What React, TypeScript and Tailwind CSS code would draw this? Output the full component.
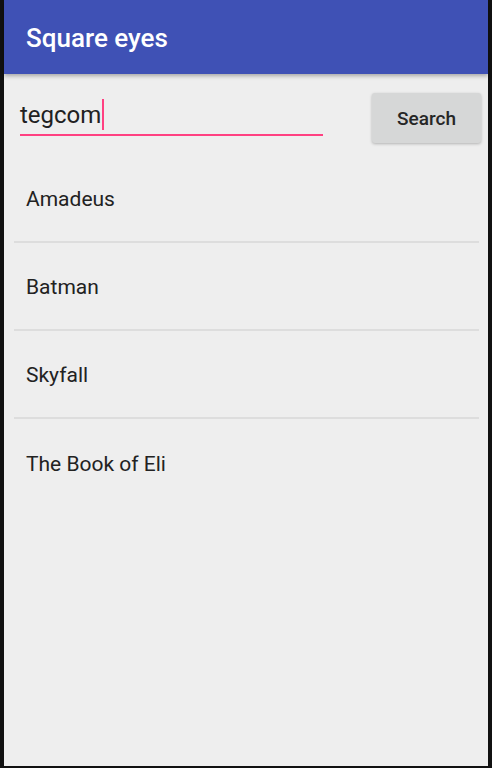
const movies = ['Amadeus', 'Batman', 'Skyfall', 'The Book of Eli']

export default function App() {
  return (
    <div className="h-[768px] w-full bg-[#111111] pl-[4px] pr-[4px] pb-[2px] font-['Roboto',sans-serif]">
      <div className="flex h-full flex-col bg-[#eeeeee]">
        <header className="relative z-10 flex h-[74px] shrink-0 items-center bg-[#3f51b5] pl-[22px] shadow-[0_2px_4px_rgba(0,0,0,0.3)]">
          <h1 className="pt-[2px] text-[26px] font-medium text-white">Square eyes</h1>
        </header>

        <div className="flex items-start pl-[16px] pr-[7px] pt-[19px]">
          <div className="relative mt-[2px] h-[41px] w-[303px] border-b-2 border-[#ff4081]">
            <div className="flex items-center pt-[4px] text-[24px] leading-[30px] text-[#212121]">
              <span>tegcom</span>
              <span className="ml-[1px] h-[31px] w-[2px] bg-[#ff4081]" />
            </div>
          </div>
          <div className="flex-1" />
          <button className="h-[50px] w-[109px] rounded-[3px] bg-[#d6d7d7] pt-[2px] text-[19px] font-medium text-[#262626] shadow-[0_1px_3px_rgba(0,0,0,0.25)]">
            Search
          </button>
        </div>

        <ul className="mt-[12px] px-[10px] pr-[9px]">
          {movies.map((m, i) => (
            <li
              key={m}
              className={
                'flex h-[88px] items-center pl-[12px] pt-[4px] text-[21px] text-[#222222] ' +
                (i < movies.length - 1 ? 'border-b-2 border-[#dddddd]' : '')
              }
            >
              {m}
            </li>
          ))}
        </ul>
      </div>
    </div>
  )
}
